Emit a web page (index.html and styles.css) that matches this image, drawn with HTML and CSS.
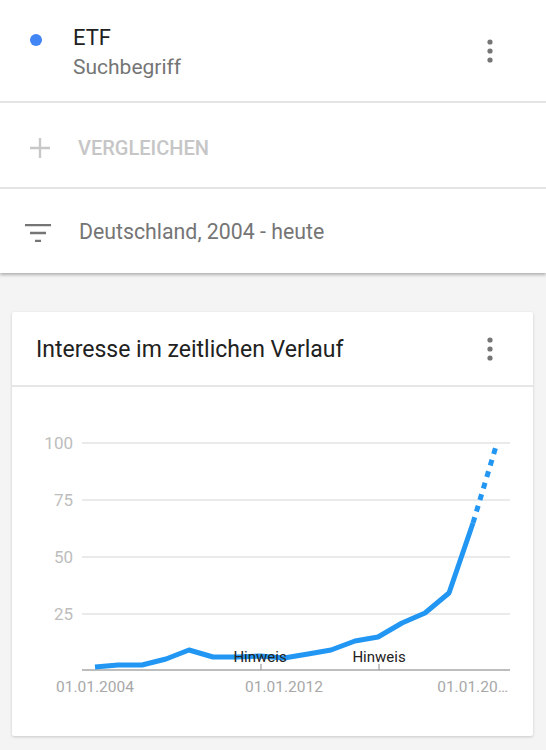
FILE: index.html
```html
<!DOCTYPE html>
<html lang="de">
<head>
<meta charset="utf-8">
<title>ETF - Google Trends</title>
<link rel="stylesheet" href="styles.css">
</head>
<body>
<div class="top">
  <div class="term-row">
    <span class="dot"></span>
    <div class="term-text">
      <div class="term-name">ETF</div>
      <div class="term-sub">Suchbegriff</div>
    </div>
    <svg class="kebab" width="6" height="24" viewBox="0 0 6 24"><circle cx="3" cy="3" r="2.6"/><circle cx="3" cy="12" r="2.6"/><circle cx="3" cy="21" r="2.6"/></svg>
  </div>
  <div class="compare-row">
    <svg class="plus" width="20" height="20" viewBox="0 0 20 20"><path d="M10 0v20M0 10h20"/></svg>
    <span class="compare-text">VERGLEICHEN</span>
  </div>
  <div class="filter-row">
    <svg class="filter" width="26" height="18" viewBox="0 0 26 18"><path d="M0 1h26M5 9h16M10 17h6"/></svg>
    <span class="filter-text">Deutschland, 2004 - heute</span>
  </div>
</div>

<div class="card">
  <div class="card-head">
    <span class="card-title">Interesse im zeitlichen Verlauf</span>
    <svg class="kebab" width="6" height="24" viewBox="0 0 6 24"><circle cx="3" cy="3" r="2.6"/><circle cx="3" cy="12" r="2.6"/><circle cx="3" cy="21" r="2.6"/></svg>
  </div>
  <svg class="chart" width="521" height="349" viewBox="0 0 521 349">
    <g class="grid">
      <line x1="70" y1="56" x2="498" y2="56"/>
      <line x1="70" y1="113" x2="498" y2="113"/>
      <line x1="70" y1="170" x2="498" y2="170"/>
      <line x1="70" y1="227" x2="498" y2="227"/>
    </g>
    <g class="ylab">
      <text x="61" y="62">100</text>
      <text x="61" y="119">75</text>
      <text x="61" y="176">50</text>
      <text x="61" y="233">25</text>
    </g>
    <line class="axis" x1="70" y1="283" x2="498" y2="283"/>
    <g class="ticks">
      <line x1="249" y1="277" x2="249" y2="283"/>
      <line x1="367" y1="277" x2="367" y2="283"/>
    </g>
    <polyline class="series" points="83,280 106,278 130,278 154,272 177,263 201,270 225,270 248,269 272,271 296,267 319,263 343,254 366,250 390,236 413,226 437,206 461,136"/>
    <polyline class="series dotted" points="461,136 485,56"/>
    <g class="note">
      <text x="248" y="275">Hinweis</text>
      <text x="367" y="275">Hinweis</text>
    </g>
    <g class="xlab">
      <text x="83" y="305" class="mid">01.01.2004</text>
      <text x="272" y="305" class="mid">01.01.2012</text>
      <text x="496" y="305" class="end">01.01.20…</text>
    </g>
  </svg>
</div>
</body>
</html>
```

FILE: styles.css
```css
html, body {
  margin: 0;
  padding: 0;
}
body {
  background: #f4f4f4;
  font-family: Roboto, "Noto Sans", "Liberation Sans", sans-serif;
  width: 546px;
  height: 750px;
  overflow: hidden;
}
.top {
  background: #fff;
  box-shadow: 0 2px 3px rgba(0, 0, 0, 0.28);
  position: relative;
}
.term-row {
  height: 101px;
  display: flex;
  align-items: center;
  padding-left: 30px;
  padding-right: 53px;
  border-bottom: 2px solid #e4e4e4;
}
.dot {
  width: 12px;
  height: 12px;
  border-radius: 50%;
  background: #4285f4;
  align-self: flex-start;
  margin-top: 34px;
  flex: none;
}
.term-text {
  margin-left: 31px;
  flex: 1;
  margin-top: 2px;
}
.term-name {
  font-size: 22px;
  line-height: 30px;
  color: #212121;
}
.term-sub {
  font-size: 21px;
  line-height: 28px;
  color: #757575;
}
.kebab {
  fill: #757575;
  flex: none;
}
.compare-row {
  height: 86px;
  display: flex;
  align-items: center;
  padding-left: 30px;
  padding-top: 6px;
  box-sizing: border-box;
  border-bottom: 2px solid #e4e4e4;
}
.plus {
  stroke: #c8c8c8;
  stroke-width: 2.4;
  fill: none;
  flex: none;
}
.compare-text {
  margin-left: 28px;
  font-size: 20px;
  font-weight: 500;
  color: #c6c6c6;
}
.filter-row {
  height: 84px;
  display: flex;
  align-items: center;
  padding-left: 25px;
}
.filter {
  stroke: #757575;
  stroke-width: 2.4;
  fill: none;
  flex: none;
  margin-top: 3px;
}
.filter-text {
  margin-left: 28px;
  font-size: 21.3px;
  color: #757575;
}
.card {
  margin: 39px 13px 0 12px;
  background: #fff;
  border-radius: 2px;
  box-shadow: 0 1px 3px rgba(0, 0, 0, 0.18);
}
.card-head {
  height: 73px;
  display: flex;
  align-items: center;
  padding-left: 24px;
  padding-right: 40px;
  border-bottom: 2px solid #e6e6e6;
}
.card-title {
  flex: 1;
  font-size: 23px;
  color: #212121;
  margin-top: 2px;
}
.chart {
  display: block;
}
.grid line {
  stroke: #e3e3e3;
  stroke-width: 1.5;
}
.axis {
  stroke: #bdbdbd;
  stroke-width: 2;
}
.ticks line {
  stroke: #9e9e9e;
  stroke-width: 1.2;
}
.ylab text {
  font-family: Roboto, "Noto Sans", sans-serif;
  font-size: 17px;
  fill: #bdbdbd;
  text-anchor: end;
}
.xlab text {
  font-family: Roboto, "Noto Sans", sans-serif;
  font-size: 15.5px;
  fill: #a8a8a8;
}
.xlab .mid {
  text-anchor: middle;
}
.xlab .end {
  text-anchor: end;
}
.note text {
  font-family: Roboto, "Noto Sans", sans-serif;
  font-size: 15px;
  fill: #222;
  text-anchor: middle;
}
.series {
  fill: none;
  stroke: #2196f3;
  stroke-width: 5;
  stroke-linejoin: round;
}
.dotted {
  stroke-dasharray: 6 6;
  stroke-linejoin: miter;
}
```
